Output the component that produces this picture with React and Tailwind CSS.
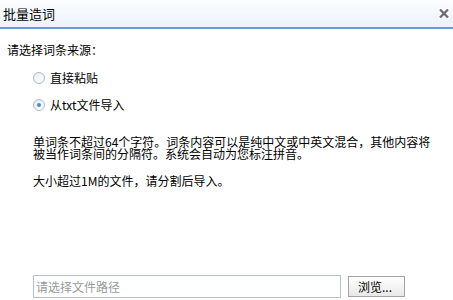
export default function App() {
  const font = { fontFamily: '"Noto Sans CJK SC", "Liberation Sans", sans-serif' };
  return (
    <div className="w-[453px] h-[300px] bg-white overflow-hidden text-black" style={font}>
      <div className="h-[29px] flex items-center justify-between pl-[3px] pr-[4px] bg-gradient-to-b from-[#fdfeff] to-[#ecf2fa] border-b-2 border-[#6b9ad6]">
        <span className="text-[13px] leading-none text-black">批量造词</span>
        <svg width="10" height="9" viewBox="0 0 10 9" className="mr-[0px]">
          <path d="M1 0.5 L9 8.5 M9 0.5 L1 8.5" stroke="#6a6a6a" strokeWidth="2.2" />
        </svg>
      </div>
      <div className="pt-[13px]">
        <div className="pl-[7px] text-[12px] leading-[16px]">请选择词条来源：</div>
        <div className="mt-[6px] pl-[33px]">
          <div className="h-[27px] flex items-center gap-[5px]">
            <span className="w-[12px] h-[12px] rounded-full border border-[#a9b9cc] bg-gradient-to-br from-[#e9edf2] to-white" />
            <span className="text-[12px] leading-none">直接粘贴</span>
          </div>
          <div className="h-[27px] flex items-center gap-[5px]">
            <span className="w-[12px] h-[12px] rounded-full border border-[#a9b9cc] bg-gradient-to-br from-[#e9edf2] to-white flex items-center justify-center">
              <span className="w-[4px] h-[4px] rounded-full bg-[#4f86d9]" />
            </span>
            <span className="text-[12px] leading-none">从txt文件导入</span>
          </div>
        </div>
        <div className="ml-[33px] w-[400px] mt-[18px] text-[12px] leading-[12px]">
          单词条不超过64个字符。词条内容可以是纯中文或中英文混合，其他内容将被当作词条间的分隔符。系统会自动为您标注拼音。
        </div>
        <div className="ml-[33px] mt-[15px] text-[12px] leading-[12px]">大小超过1M的文件，请分割后导入。</div>
        <div className="ml-[33px] mt-[88px] flex items-center gap-[7px]">
          <div className="w-[308px] h-[23px] border border-[#b4c0cf] flex items-center pl-[2px] text-[12px] text-[#9a9a9a]">
            请选择文件路径
          </div>
          <div className="w-[57px] h-[21px] border border-[#a3a3a3] bg-gradient-to-b from-white to-[#e9e9e9] flex items-center pl-[9px] text-[12px]">
            浏览...
          </div>
        </div>
      </div>
    </div>
  );
}
